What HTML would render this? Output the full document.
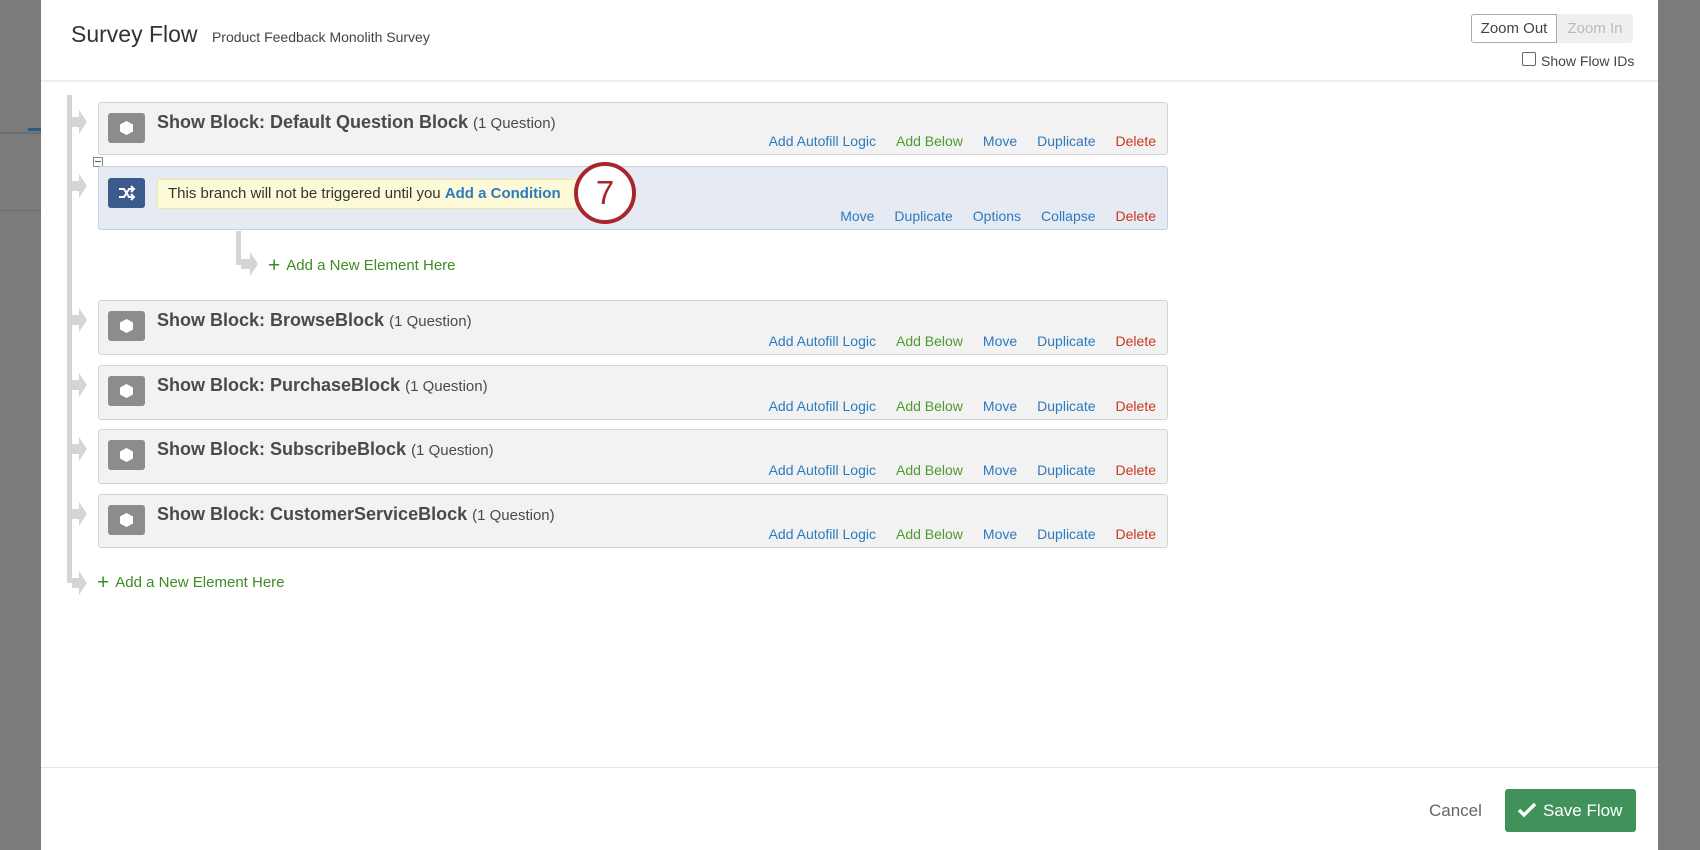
<!DOCTYPE html>
<html><head><style>
*{box-sizing:border-box;margin:0;padding:0}
body{width:1700px;height:850px;overflow:hidden;background:#7b7b7b;font-family:"Liberation Sans",sans-serif;position:relative}
.modal{position:absolute;left:41px;top:0;width:1617px;height:850px;background:#fff}
.abs{position:absolute}
.blk{position:absolute;left:98px;width:1070px;background:#f2f2f2;border:1px solid #d3d3d3;border-radius:3px}
.ico{position:absolute;left:9px;top:10px;width:37px;height:30px;background:#8c8c8c;border-radius:3px}
.ttl{position:absolute;left:58px;top:9px;font-size:18px;font-weight:bold;color:#4a4a4a;white-space:nowrap}
.ttl span{font-weight:normal;font-size:15px}
.acts{position:absolute;right:11px;bottom:5px;font-size:14px;white-space:nowrap}
.acts a{margin-left:20px;color:#2c7ac0;text-decoration:none}
.acts a.g{color:#4e9a2a}.acts a.r{color:#c8391d}
.add{position:absolute;color:#3d8d26;font-size:15px;white-space:nowrap}
.add b{font-size:21px;font-weight:normal;margin-right:6px;vertical-align:-2px}
</style></head><body>
<div class="abs" style="left:0;top:132px;width:41px;height:2px;background:#6c6c6c"></div>
<div class="abs" style="left:0;top:210px;width:41px;height:1px;background:#6c6c6c"></div>
<div class="abs" style="left:28px;top:128px;width:13px;height:3px;background:#2a5b85"></div>
<div class="modal">
<div class="abs" style="left:30px;top:21px;font-size:23px;color:#333;white-space:nowrap">Survey Flow <span style="font-size:14px;margin-left:8px;color:#444">Product Feedback Monolith Survey</span></div>
<div class="abs" style="left:1430px;top:14px;width:86px;height:29px;border:1px solid #aaa;border-radius:3px 0 0 3px;font-size:15px;color:#444;text-align:center;line-height:27px">Zoom Out</div>
<div class="abs" style="left:1516px;top:14px;width:76px;height:29px;background:#efefef;border-radius:0 3px 3px 0;font-size:15px;color:#bbb;text-align:center;line-height:29px">Zoom In</div>
<div class="abs" style="left:1481px;top:52px;width:14px;height:14px;border:1px solid #666;border-radius:2px"></div>
<div class="abs" style="left:1500px;top:53px;font-size:14px;color:#444">Show Flow IDs</div>
<div class="abs" style="left:0;top:80px;width:1617px;height:2px;background:#eee"></div>
<div class="abs" style="left:0;top:767px;width:1617px;height:1px;background:#e5e5e5"></div>
<div class="abs" style="left:1388px;top:801px;font-size:17px;color:#666">Cancel</div>
<div class="abs" style="left:1464px;top:789px;width:131px;height:43px;background:#41925a;border-radius:3px;color:#fff;font-size:17px;line-height:43px;padding-left:12px;white-space:nowrap"><svg width="20" height="16" viewBox="0 0 20 16" style="vertical-align:-2px;margin-right:6px"><path d="M2 8l5 5L18 2" stroke="#fff" stroke-width="3.4" fill="none"/></svg>Save Flow</div>
</div>
<svg class="abs" style="left:0;top:0" width="1700" height="850">
<g fill="#d5d5d5">
<rect x="67" y="95" width="5" height="488"/>
<path d="M72 117h7v-7l8 12-8 12v-7h-7z"/>
<path d="M72 181h7v-7l8 12-8 12v-7h-7z"/>
<path d="M72 315h7v-7l8 12-8 12v-7h-7z"/>
<path d="M72 380h7v-7l8 12-8 12v-7h-7z"/>
<path d="M72 444h7v-7l8 12-8 12v-7h-7z"/>
<path d="M72 509h7v-7l8 12-8 12v-7h-7z"/>
<path d="M72 578h7v-7l8 12-8 12v-7h-7z"/>
<rect x="236" y="231" width="5" height="34"/>
<path d="M241 259h9v-7l8 12-8 12v-7h-9z"/>
</g>
</svg>
<div class="blk" style="top:102px;height:53px"><div class="ico"></div><div class="ttl">Show Block: Default Question Block <span>(1 Question)</span></div><div class="acts"><a>Add Autofill Logic</a><a class="g">Add Below</a><a>Move</a><a>Duplicate</a><a class="r">Delete</a></div></div>
<div class="abs" style="left:93px;top:157px;width:10px;height:10px;border:1px solid #888;background:#fff"><div style="margin:3px 1px;height:1px;background:#555"></div></div>
<div class="blk" style="top:166px;height:64px;background:#e6eaf3;border-color:#c6d0e0"><div class="ico" style="background:#3c5a8c;top:11px"><svg width="37" height="30" viewBox="0 0 37 30"><path d="M11 11h5l5 8h5M11 19h5l5-8h5M23 8l3 3-3 3M23 16l3 3-3 3" stroke="#fff" stroke-width="2" fill="none"/></svg></div>
<div class="abs" style="left:58px;top:12px;width:424px;height:30px;background:#fdfbd7;border:1px solid #f0e6a6;font-size:15px;line-height:28px;padding-left:10px;color:#333;white-space:nowrap">This branch will not be triggered until you <b style="color:#2c7ac0">Add a Condition</b></div>
<div class="acts"><a>Move</a><a>Duplicate</a><a>Options</a><a>Collapse</a><a class="r">Delete</a></div></div>
<div class="abs" style="left:574px;top:162px;width:62px;height:62px;border:4px solid #a8262b;border-radius:50%;background:#fff;font-size:33px;color:#a8262b;text-align:center;line-height:54px">7</div>
<div class="add" style="left:268px;top:254px"><b>+</b>Add a New Element Here</div>
<div class="blk" style="top:300px;height:55px"><div class="ico"></div><div class="ttl">Show Block: BrowseBlock <span>(1 Question)</span></div><div class="acts"><a>Add Autofill Logic</a><a class="g">Add Below</a><a>Move</a><a>Duplicate</a><a class="r">Delete</a></div></div>
<div class="blk" style="top:365px;height:55px"><div class="ico"></div><div class="ttl">Show Block: PurchaseBlock <span>(1 Question)</span></div><div class="acts"><a>Add Autofill Logic</a><a class="g">Add Below</a><a>Move</a><a>Duplicate</a><a class="r">Delete</a></div></div>
<div class="blk" style="top:429px;height:55px"><div class="ico"></div><div class="ttl">Show Block: SubscribeBlock <span>(1 Question)</span></div><div class="acts"><a>Add Autofill Logic</a><a class="g">Add Below</a><a>Move</a><a>Duplicate</a><a class="r">Delete</a></div></div>
<div class="blk" style="top:494px;height:54px"><div class="ico"></div><div class="ttl">Show Block: CustomerServiceBlock <span>(1 Question)</span></div><div class="acts"><a>Add Autofill Logic</a><a class="g">Add Below</a><a>Move</a><a>Duplicate</a><a class="r">Delete</a></div></div>
<div class="add" style="left:97px;top:571px"><b>+</b>Add a New Element Here</div>
<style>.ico::after{content:"";position:absolute;left:12px;top:8px;width:13px;height:14px;background:#fff;clip-path:polygon(50% 0,100% 25%,100% 75%,50% 100%,0 75%,0 25%)}</style>
<style>div[style*="3c5a8c"]::after{display:none}</style>
</body></html>
